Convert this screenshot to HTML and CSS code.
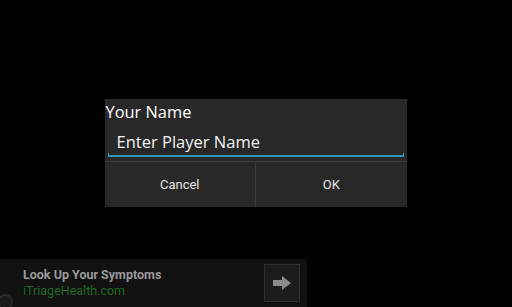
FILE: index.html
```html
<!DOCTYPE html>
<html>
<head>
<meta charset="utf-8">
<link rel="stylesheet" href="styles.css">
</head>
<body>
<div class="screen">
  <div class="center">
    <div class="dialog">
      <div class="title">Your Name</div>
      <div class="field">
        <div class="input">Enter Player Name</div>
        <div class="underline"></div>
      </div>
      <div class="buttons">
        <div class="btn">Cancel</div>
        <div class="btn">OK</div>
      </div>
    </div>
  </div>
  <div class="ad">
    <div class="ad-text">
      <div class="ad-title">Look Up Your Symptoms</div>
      <div class="ad-url">iTriageHealth.com</div>
    </div>
    <div class="ad-btn">
      <svg width="20" height="16" viewBox="0 0 20 16"><path d="M1 5h9V1l9 7-9 7v-4H1z" fill="#8a8a8a"/></svg>
    </div>
    <div class="ad-info"></div>
  </div>
</div>
</body>
</html>
```
FILE: styles.css
```css
html, body { margin: 0; padding: 0; background: #000; }
.screen { width: 512px; height: 307px; position: relative; display: flex; flex-direction: column; font-family: Roboto, "Noto Sans", sans-serif; overflow: hidden; }
.center { height: 259px; display: flex; justify-content: center; align-items: flex-start; padding-top: 99px; box-sizing: border-box; padding-right: 1px; }
.dialog { width: 302px; height: 108px; background: #282828; display: flex; flex-direction: column; }
.title { color: #fff; font-family: "Open Sans", "Noto Sans", sans-serif; font-size: 16.4px; line-height: 20px; padding: 3px 0 0 1px; height: 22px; box-sizing: border-box; }
.field { padding: 0 3px 0 3px; height: 40px; box-sizing: border-box; position: relative; }
.input { color: #f2f2f2; font-family: "Open Sans", "Noto Sans", sans-serif; font-size: 16.5px; line-height: 22px; padding: 10px 0 0 9px; height: 34px; box-sizing: border-box; }
.underline { height: 2px; background: #2c93bb; margin-top: 0; position: relative; }
.underline::before, .underline::after { content: ""; position: absolute; bottom: 0; width: 1px; height: 4px; background: #2c93bb; }
.underline::before { left: 0; }
.underline::after { right: 0; }
.buttons { flex: 1; display: flex; border-top: 1px solid #3a3a3a; }
.btn { flex: 1; display: flex; align-items: center; justify-content: center; color: #e6e6e6; font-size: 13px; }
.btn + .btn { border-left: 1px solid #3a3a3a; }
.ad { width: 307px; height: 48px; background: #111; display: flex; align-items: center; position: relative; }
.ad-text { flex: 1; padding-left: 23px; display: flex; flex-direction: column; }
.ad-title { color: #9a9a9a; font-weight: bold; font-size: 12.5px; line-height: 15px; margin-top: -1px; }
.ad-url { color: #1f6b22; font-size: 12.5px; line-height: 15px; margin-top: 1px; }
.ad-btn { width: 34px; height: 36px; margin-right: 7px; background: #1c1c1c; border: 1px solid #2e2e2e; display: flex; align-items: center; justify-content: center; }
.ad-info { position: absolute; left: -3px; bottom: -3px; width: 12px; height: 12px; border: 2px solid #2a2a2a; border-radius: 50%; background: #1a1a1a; }
```
